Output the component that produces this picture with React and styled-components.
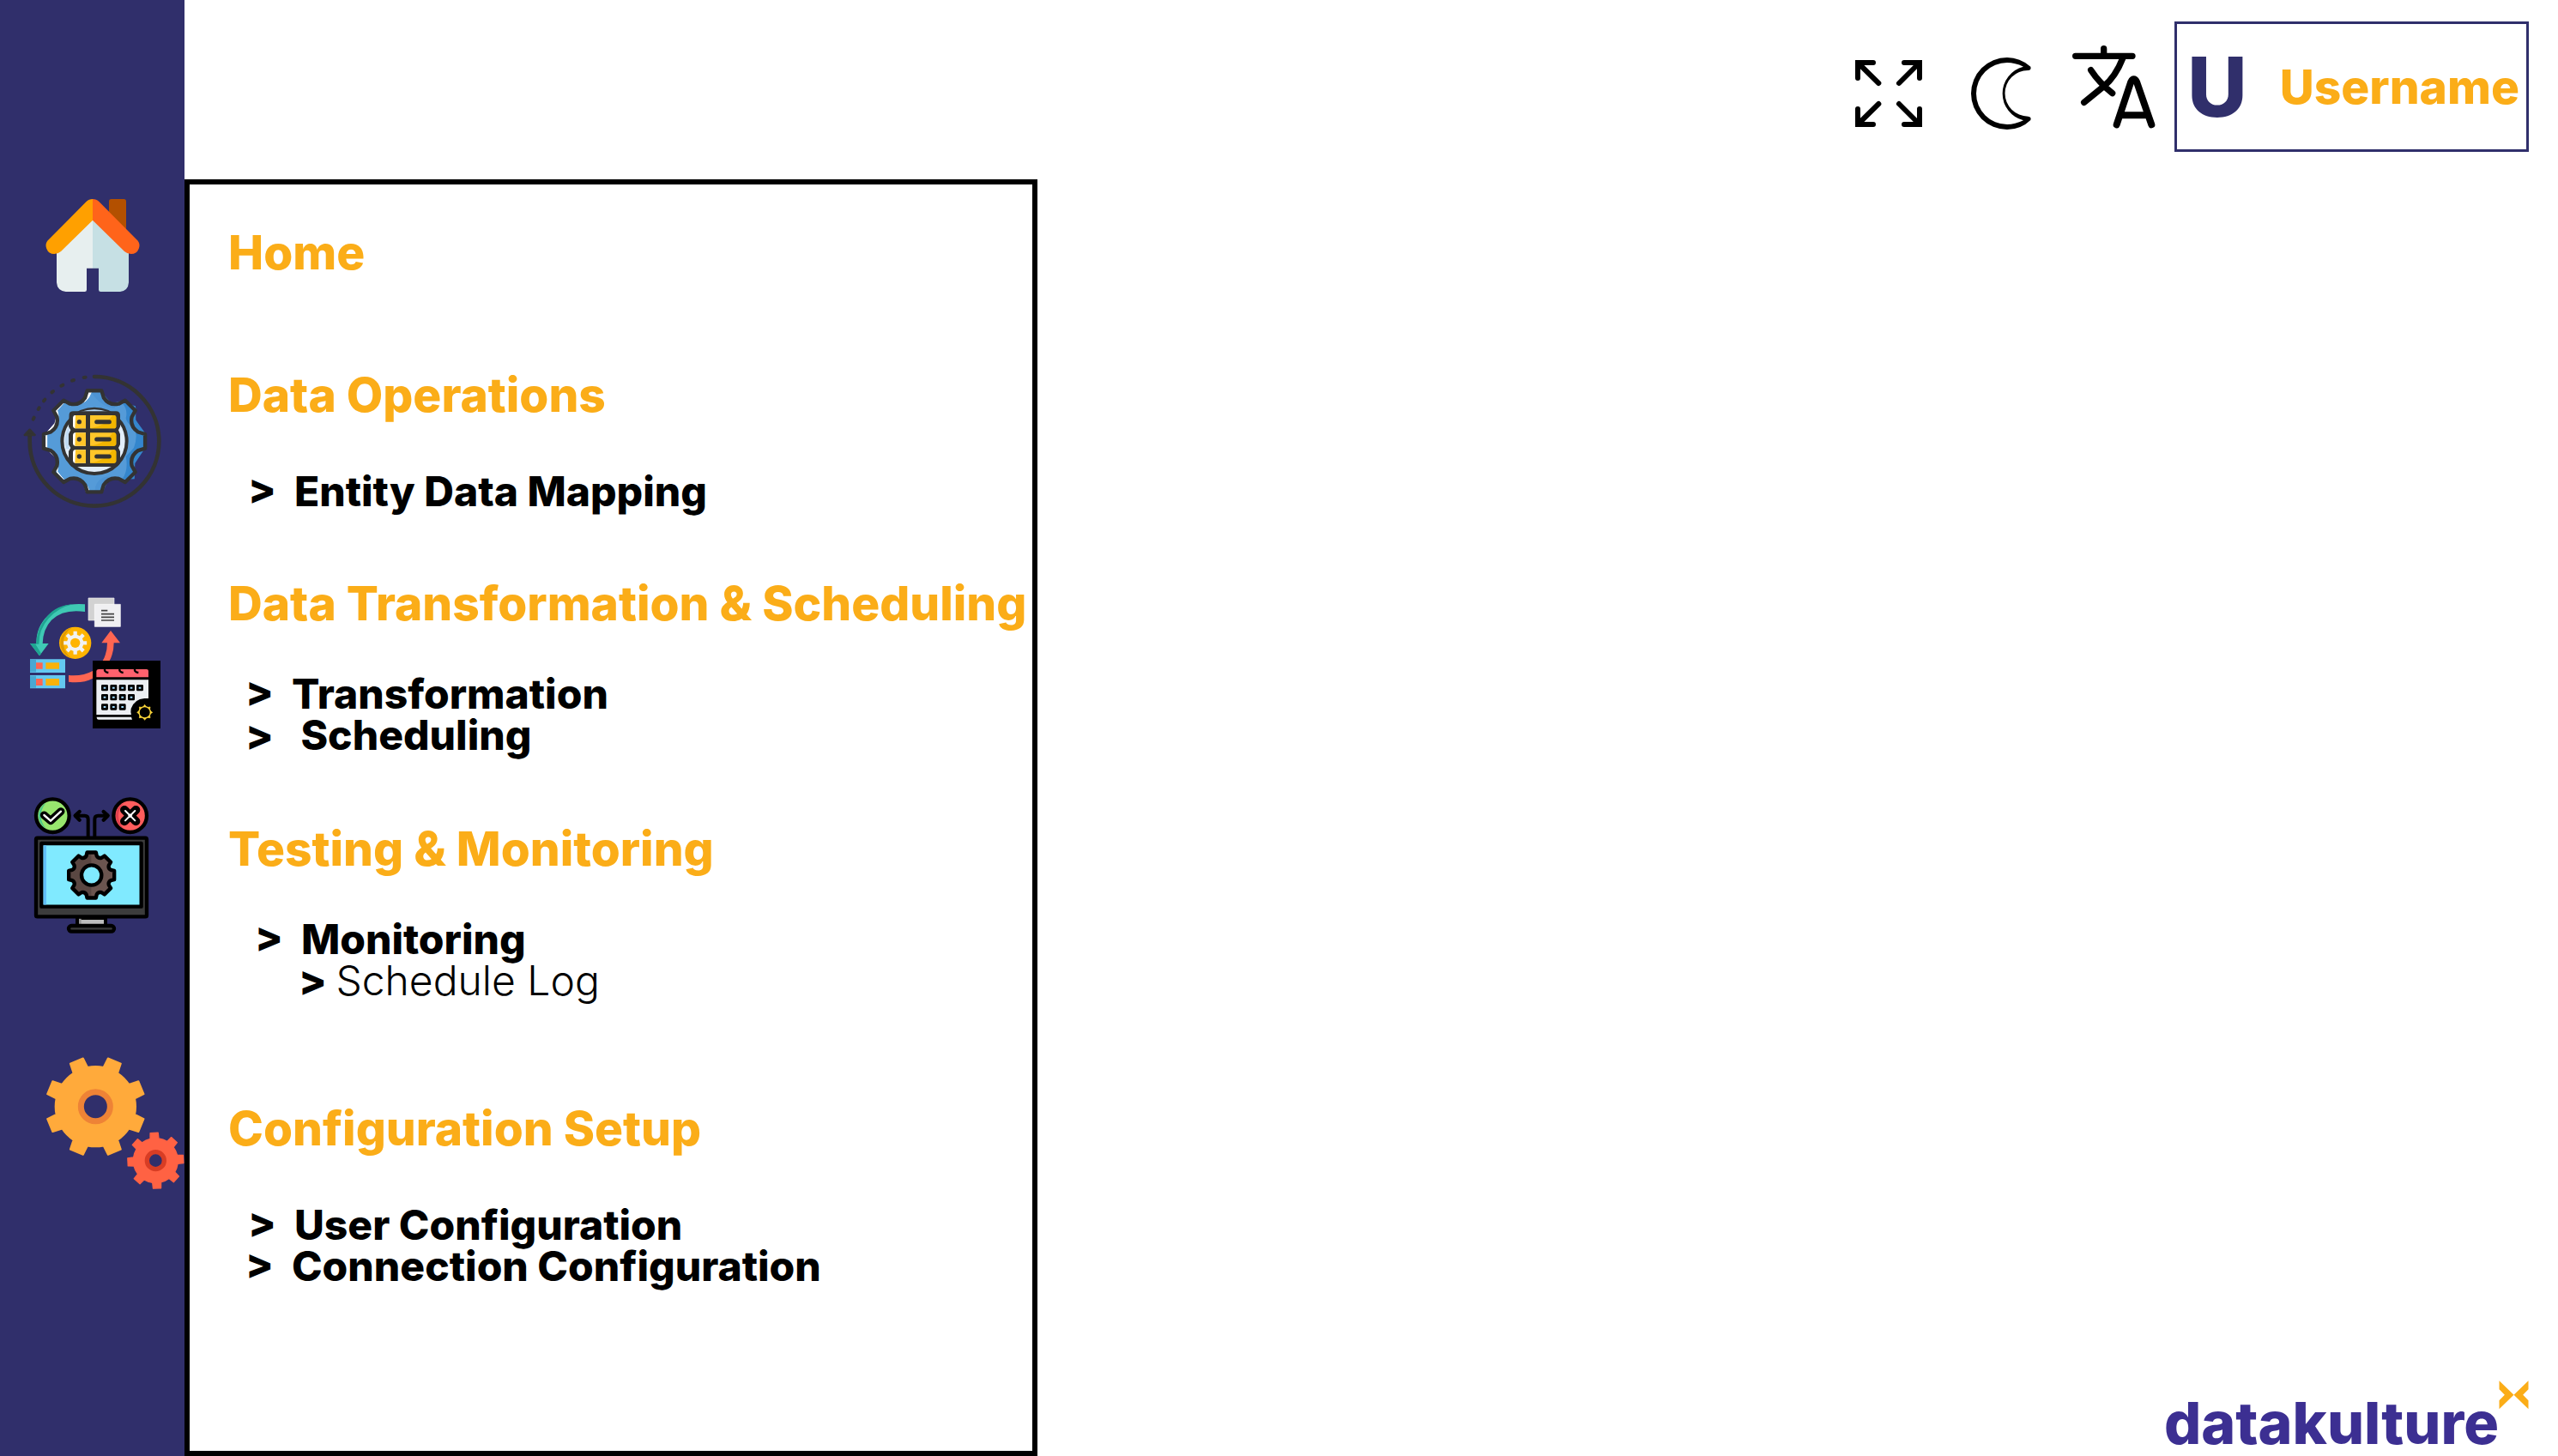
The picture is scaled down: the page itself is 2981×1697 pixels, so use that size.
import React from "react";
import styled, { createGlobalStyle } from "styled-components";

const color = {
  navy: "#302f6b",
  amber: "#fbad18",
  brand: "#3c2f92",
  ink: "#000000",
};

const GlobalStyle = createGlobalStyle`
  *, *::before, *::after { box-sizing: border-box; }
  body {
    margin: 0;
    background: #ffffff;
    color: ${color.ink};
    font-family: Inter, "Liberation Sans", sans-serif;
  }
`;

const Page = styled.div`
  display: grid;
  grid-template-columns: 215px minmax(0, 1fr);
  min-height: 100vh;
`;

const Rail = styled.nav`
  display: flex;
  flex-direction: column;
  padding-top: 206px;
  background: ${color.navy};
`;

const RailLink = styled.a`
  display: block;
  height: 160px;
  margin-top: ${(p) => p.$before}px;

  svg {
    display: block;
    width: 100%;
    height: 100%;
  }
`;

const Content = styled.div`
  display: flex;
  flex-direction: column;
`;

const TopBar = styled.header`
  display: flex;
  align-items: flex-start;
  justify-content: flex-end;
  gap: 23px;
  height: 209px;
  padding: 25px 34px 0;
`;

const Tools = styled.div`
  display: flex;
  align-items: center;
  gap: 35px;
  height: 152px;
`;

const ToolButton = styled.button`
  width: 96px;
  height: 96px;
  padding: 0;
  border: 0;
  background: none;
  color: inherit;
  cursor: pointer;

  svg {
    display: block;
    width: 100%;
    height: 100%;
    overflow: visible;
  }
`;

const UserButton = styled.button`
  display: flex;
  align-items: center;
  justify-content: space-between;
  width: 413px;
  height: 152px;
  padding: 0 8px 0 12px;
  border: 3px solid ${color.navy};
  background: #ffffff;
  font-family: inherit;
  font-weight: 800;
  cursor: pointer;
`;

const Initial = styled.span`
  color: ${color.navy};
  font-size: 96px;
  line-height: 96px;
`;

const UserName = styled.span`
  color: ${color.amber};
  font-size: 55px;
  line-height: 66px;
`;

const Body = styled.div`
  display: flex;
  flex: 1;
`;

const Menu = styled.nav`
  width: 994px;
  padding: 46px 0 0 45px;
  border: 6px solid ${color.ink};
  background: #ffffff;
  white-space: nowrap;
`;

const Group = styled.section`
  margin-top: ${(p) => p.$before}px;
`;

const GroupTitle = styled.h2`
  margin: 0;
  color: ${color.amber};
  font-size: 55px;
  font-weight: 800;
  line-height: 66px;

  a {
    color: inherit;
    text-decoration: none;
  }
`;

const Items = styled.ul`
  margin: ${(p) => p.$before}px 0 0;
  padding: 0;
  list-style: none;
`;

const Item = styled.li`
  padding-left: ${(p) => p.$indent}px;
  font-size: 48px;
  font-weight: 800;
  line-height: 48px;
`;

const ItemLink = styled.a`
  color: inherit;
  text-decoration: none;
  white-space: pre;
`;

const Light = styled.span`
  font-weight: 300;
`;

const Main = styled.main`
  display: flex;
  flex: 1;
  align-items: flex-end;
  justify-content: flex-end;
  padding-right: 34px;
`;

const Brand = styled.a`
  display: flex;
  align-items: flex-end;
  height: 88px;
  color: ${color.brand};
  font-size: 68px;
  font-weight: 800;
  line-height: 78px;
  text-decoration: none;

  svg {
    align-self: flex-start;
    width: 35px;
    height: 34px;
  }
`;

const at = (cx, cy, r, deg) => {
  const a = ((deg - 90) * Math.PI) / 180;
  return `${(cx + r * Math.cos(a)).toFixed(1)} ${(cy + r * Math.sin(a)).toFixed(1)}`;
};

/* Eight-toothed cog with flat-sided teeth. */
const cog = (cx, cy, tip, root, tipHalf, rootHalf, turn = 0) => {
  let d = "";
  for (let k = 0; k < 8; k += 1) {
    const a = turn + k * 45;
    d += `${k ? "L" : "M"}${at(cx, cy, root, a - rootHalf)}L${at(cx, cy, tip, a - tipHalf)}L${at(cx, cy, tip, a + tipHalf)}L${at(cx, cy, root, a + rootHalf)}`;
    d += `A${root} ${root} 0 0 1 ${at(cx, cy, root, a + 45 - rootHalf)}`;
  }
  return `${d}Z`;
};

/* Eight-toothed cog with scooped valleys. */
const softCog = (cx, cy, tip, shoulder, valley, tipHalf, shoulderHalf) => {
  let d = "";
  for (let k = 0; k < 8; k += 1) {
    const a = k * 45;
    d += `${k ? "L" : "M"}${at(cx, cy, tip, a - tipHalf)}L${at(cx, cy, tip, a + tipHalf)}L${at(cx, cy, shoulder, a + shoulderHalf)}`;
    d += `Q${at(cx, cy, valley, a + 22.5)} ${at(cx, cy, shoulder, a + 45 - shoulderHalf)}`;
  }
  return `${d}Z`;
};

const HomeIcon = () => (
  <svg viewBox="0 18 645 480" aria-hidden="true">
    <path d="M381 200V104Q381 96 389 96H433Q441 96 441 104V204Z" fill="#b35000" />
    <path d="M324 166L198 285V388Q200 417 230 420H296Q303 420 303 413V338H324Z" fill="#e7efef" />
    <path d="M324 166L450 285V388Q448 417 420 420H352Q345 420 345 413V338H324Z" fill="#c6e0e4" />
    <path d="M324 96Q311 96 301 106L171 237A29 29 0 0 0 190 288Q203 288 213 279L324 170Z" fill="#ffa000" />
    <path d="M324 96Q337 96 347 106L477 237A29 29 0 0 1 458 288Q445 288 435 279L324 170Z" fill="#ff641a" />
  </svg>
);

const OperationsIcon = () => {
  const body = softCog(330, 313, 179, 156, 134, 8, 12);
  return (
    <svg viewBox="0 72 645 480" aria-hidden="true">
      <path d="M330 87A226 226 0 1 1 104 313V290" fill="none" stroke="#333" strokeWidth="14" strokeLinecap="round" />
      <path d="M86 291L104 272L122 291Z" fill="#333" stroke="#333" strokeWidth="7" strokeLinejoin="round" />
      <path
        d="M293 90L299 89M252 101L258 99M214 119L220 116M181 142L186 138M153 172L157 167M134 201L137 196M116 236L119 230"
        stroke="#333"
        strokeWidth="12"
        strokeLinecap="round"
      />
      <path d={body} fill="#559bd8" />
      <path d="M318 140Q350 190 400 198Q405 178 428 182Q448 200 442 226Q442 246 470 255Q492 280 472 330L442 374Q446 400 440 430L418 446Q390 430 360 440Q330 456 332 490H360L378 450L440 442L470 440V390L505 340V290L475 240V195L430 170L390 180L355 140Z" fill="#4790d2" opacity="0.6" />
      <path d="M428 178Q448 205 440 232Q442 252 468 262Q484 290 468 336L440 366Q450 410 428 446L470 445L472 390L508 335V285L474 238V190Z" fill="#3486cd" />
      <path d="M313 139L294 170Q286 182 272 180Q304 184 320 139ZM222 180L200 205Q206 225 203 240Q192 270 164 284V340Q184 355 198 372Q205 400 200 422L222 446L196 414Q205 385 194 368L160 338V286L192 250Q202 225 196 204L216 180ZM272 448Q296 452 300 488H312Q304 454 272 448Z" fill="#fff" stroke="#fff" strokeWidth="3" />
      <path d={body} fill="none" stroke="#333" strokeWidth="13" strokeLinejoin="round" />
      <circle cx="330" cy="313" r="113" fill="#e2eefa" stroke="#333" strokeWidth="12" />
      <path d="M281 210Q330 193 378 210Z" fill="#b5d7f4" />
      <path d="M232 340Q218 300 242 258V340Z" fill="#c1daf2" />
      <path d="M242 218Q244 208 256 208H405Q420 208 420 222V262L414 274L420 288V324L414 336L420 348V390L408 402H250L240 388V348L247 336L240 324V288L247 274L240 262Z" fill="#333" />
      {[222, 283, 343].map((y) => (
        <g key={y}>
          <path d={`M262 ${y}H300V${y + 46}H262Q255 ${y + 44} 255 ${y + 37}V${y + 9}Q256 ${y} 262 ${y}Z`} fill="#fff" />
          <path d={`M264 ${y}H300V${y + 46}H262Z`} fill="#ffc629" />
          <path d={`M315 ${y}H398Q406 ${y} 406 ${y + 8}V${y + 38}Q406 ${y + 46} 398 ${y + 46}H315Z`} fill="#ffc629" />
          <path d={`M315 ${y + 46}Q370 ${y + 38} 394 ${y}H398Q406 ${y} 406 ${y + 8}V${y + 38}Q406 ${y + 46} 398 ${y + 46}Z`} fill="#f2b600" />
          <circle cx="277" cy={y + 23} r="8" fill="#333" />
          <path d={`M338 ${y + 23}H382`} stroke="#333" strokeWidth="15" strokeLinecap="round" />
        </g>
      ))}
    </svg>
  );
};

const TransformIcon = () => (
  <svg viewBox="0 69 645 480" aria-hidden="true">
    <path d="M297 103Q215 96 168 142Q126 182 127 240H105L138 283L170 240H149Q150 190 180 158Q222 118 297 129Z" fill="#3fc9b4" />
    <path d="M255 103Q198 106 164 146Q128 188 127 240H105L138 283L144 275L124 242H136Q136 190 170 152Q205 114 255 103Z" fill="#1fa592" />
    <path d="M309 81H399V159H309Z" fill="#d2d2d2" stroke="#f0f0f2" strokeWidth="2" />
    <path d="M331 103H421V181H331Z" fill="#f0f0f2" stroke="#fff" strokeWidth="2" />
    <path d="M354 125H376M354 137H399M354 148H399M354 159H399" stroke="#444" strokeWidth="5" />
    <circle cx="263" cy="238" r="56" fill="#ffb400" />
    <path d="M252 184A56 56 0 0 0 252 292Q222 272 222 238T252 184Z" fill="#e09a00" />
    <path d={cog(263, 238, 41, 29, 9, 13)} fill="#f1f2f2" />
    <circle cx="263" cy="238" r="17" fill="#ffb400" />
    <path d="M105 295H228V342H105ZM105 351H228V397H105Z" fill="#64c8f0" />
    <path d="M105 297H126V340H105ZM105 353H126V395H105Z" fill="#49a8d3" />
    <path d="M126 307H149V329H126ZM126 363H149V387H126Z" fill="#ff6652" />
    <path d="M160 307H207V329H160ZM160 363H207V387H160Z" fill="#f9b20b" />
    <path d="M240 351Q290 355 324 336V362Q290 380 240 374ZM387 195L420 238H398Q398 275 381 304H357Q375 275 375 238H355Z" fill="#ff6652" />
    <path d="M324 300H561V537H324Z" fill="#000" />
    <path d="M337 336Q338 330 345 330H512Q519 330 519 336V358H337Z" fill="#ff616d" />
    <path d="M366 328Q364 340 379 342M418 328Q416 340 431 342M471 328Q469 340 484 342" fill="none" stroke="#000" strokeWidth="7" />
    <path d="M337 367H519V432H505Q470 434 458 468Q456 480 459 489H337Z" fill="#eceff3" />
    <path d="M338 497H459L462 506H345Q338 506 338 497Z" fill="#eceff3" />
    {[
      [395, [366, 397, 428, 459, 489]],
      [428, [366, 397, 428, 459]],
      [462, [366, 397, 428]],
    ].map(([y, xs]) =>
      xs.map((x) => (
        <rect key={`${x}-${y}`} x={x - 8} y={y - 7} width="16" height="14" fill="#9fdcff" stroke="#000" strokeWidth="8" strokeLinejoin="round" />
      ))
    )}
    {[0, 45, 90, 135, 180, 225, 270, 315].map((a) => (
      <path key={a} d={`M${at(506, 481, 20, a - 16)}L${at(506, 481, 27, a)}L${at(506, 481, 20, a + 16)}Z`} fill="#ffd93b" stroke="#ffd93b" strokeWidth="2" />
    ))}
    <circle cx="506" cy="481" r="20" fill="#000" stroke="#ffd93b" strokeWidth="4" />
  </svg>
);

const MonitorIcon = () => (
  <svg viewBox="0 54 645 480" aria-hidden="true">
    <path d="M308 195V134Q308 122 296 122H262M331 195V134Q331 122 343 122H378" fill="none" stroke="#000" strokeWidth="12" />
    <path d="M278 108L263 122L278 137M362 108L377 122L362 137" fill="none" stroke="#000" strokeWidth="13" strokeLinecap="round" strokeLinejoin="round" />
    <circle cx="184" cy="122" r="58" fill="#98e66e" stroke="#000" strokeWidth="13" />
    <path d="M160 78A51 51 0 0 0 160 166Q143 145 143 122T160 78Z" fill="#4cc78a" />
    <path d="M154 120L177 140L213 107" fill="none" stroke="#000" strokeWidth="27" strokeLinecap="round" strokeLinejoin="round" />
    <path d="M154 120L177 140L213 107" fill="none" stroke="#fff" strokeWidth="7" strokeLinecap="round" />
    <circle cx="455" cy="122" r="58" fill="#ff5d5d" stroke="#000" strokeWidth="13" />
    <path d="M432 77A51 51 0 0 0 432 167Q414 145 414 122T432 77Z" fill="#e0404f" />
    <path d="M435 102L475 142M475 102L435 142" stroke="#000" strokeWidth="30" strokeLinecap="round" />
    <path d="M438 105L472 139M472 105L438 139" stroke="#fff" strokeWidth="6" strokeLinecap="round" />
    <path d="M455 116L461 122L455 128L449 122Z" fill="#fff" stroke="#fff" strokeWidth="3" />
    <path d="M270 480H369V508H270Z" fill="#bdbdbd" stroke="#000" strokeWidth="12" />
    <path d="M276 482H284V502H276Z" fill="#999" />
    <rect x="126" y="200" width="387" height="275" rx="5" fill="#3c3c3c" stroke="#000" strokeWidth="13" />
    <rect x="145" y="219" width="349" height="221" fill="#80eaff" stroke="#000" strokeWidth="13" strokeLinejoin="round" />
    <path d="M152 226H162V433H152Z" fill="#62c0f8" />
    <path d={softCog(320, 330, 81, 70, 62, 11, 15)} fill="#6b554f" />
    <path d="M319 250Q290 260 285 270L258 280L262 300L240 320V340L262 352L258 380L285 390L305 410H319Z" fill="#5a4742" />
    <path d={softCog(320, 330, 81, 70, 62, 11, 15)} fill="none" stroke="#000" strokeWidth="13" strokeLinejoin="round" />
    <circle cx="320" cy="330" r="35" fill="#80eaff" stroke="#000" strokeWidth="13" />
    <rect x="240" y="507" width="159" height="20" rx="10" fill="#3c3c3c" stroke="#000" strokeWidth="13" />
  </svg>
);

const SettingsIcon = () => (
  <svg viewBox="0 60 645 480" aria-hidden="true">
    <path d={cog(334, 239, 174, 140, 8, 11, 22.5)} fill="#ffaa3b" stroke="#ffaa3b" strokeWidth="6" strokeLinejoin="round" />
    <circle cx="334" cy="239" r="51" fill={color.navy} stroke="#ee8336" strokeWidth="21" />
    <path d={cog(544, 428, 98, 78, 8, 11, -3)} fill="#ff6243" stroke="#ff6243" strokeWidth="4" strokeLinejoin="round" />
    <circle cx="544" cy="428" r="30" fill={color.navy} stroke="#d83d24" strokeWidth="16" />
  </svg>
);

const ExpandIcon = () => (
  <svg viewBox="69 129 288 288" fill="none" stroke="currentColor" strokeWidth="18" strokeLinecap="round" aria-hidden="true">
    <path d="M159 189H105V243M108 192L178 261" />
    <path d="M267 189H321V243M318 192L249 261" />
    <path d="M159 405H105V351M108 402L178 333" />
    <path d="M267 405H321V351M318 402L249 333" />
    <path d="M96 198V183Q96 180 99 180H115V198ZM330 198V183Q330 180 327 180H311V198ZM96 396V411Q96 414 99 414H115V396ZM330 396V411Q330 414 327 414H311V396Z" fill="currentColor" stroke="none" />
  </svg>
);

const MoonIcon = () => (
  <svg viewBox="462 129 288 288" aria-hidden="true">
    <path
      fill="currentColor"
      fillRule="evenodd"
      d="M709 203Q672 171 627 171A126 126 0 0 0 627 423Q675 423 709 390Q713 378 700 377A80 80 0 0 1 700 216Q713 215 709 203ZM684 203A97 97 0 0 0 684 391Q655 405 627 405A108 108 0 0 1 627 189Q655 189 684 203Z"
    />
  </svg>
);

const TranslateIcon = () => (
  <svg viewBox="855 129 288 288" fill="none" stroke="currentColor" strokeWidth="22" strokeLinecap="round" strokeLinejoin="round" aria-hidden="true">
    <path d="M866 166H1065M965 140V162" />
    <path d="M1032 172Q1006 238 965 272L896 328M920 215Q948 258 995 296" />
    <path d="M1010 406L1060 256Q1070 238 1080 256L1132 406M1028 373H1112" strokeWidth="24" />
  </svg>
);

const BrandMark = () => (
  <svg viewBox="0 0 104 102" aria-hidden="true">
    <path d="M1 1L52 50L1 100V70L20 50L1 31ZM103 1L52 50L103 100V70L84 50L103 31Z" fill={color.amber} />
  </svg>
);

const railLinks = [
  { label: "Home", Icon: HomeIcon, before: 0 },
  { label: "Data Operations", Icon: OperationsIcon, before: 68 },
  { label: "Data Transformation & Scheduling", Icon: TransformIcon, before: 99 },
  { label: "Testing & Monitoring", Icon: MonitorIcon, before: 75 },
  { label: "Configuration Setup", Icon: SettingsIcon, before: 142 },
];

const indent = { narrow: 20, regular: 23, wide: 31, nested: 82 };

const groups = [
  {
    title: "Data Operations",
    before: 100,
    gap: 56,
    items: [{ text: ">  Entity Data Mapping", indent: indent.regular }],
  },
  {
    title: "Data Transformation & Scheduling",
    before: 73,
    gap: 49,
    items: [
      { text: ">  Transformation", indent: indent.narrow },
      { text: ">   Scheduling", indent: indent.narrow },
    ],
  },
  {
    title: "Testing & Monitoring",
    before: 75,
    gap: 49,
    items: [
      { text: ">  Monitoring", indent: indent.wide },
      { text: "> ", light: "Schedule Log", indent: indent.nested },
    ],
  },
  {
    title: "Configuration Setup",
    before: 115,
    gap: 56,
    items: [
      { text: ">  User Configuration", indent: indent.regular },
      { text: ">  Connection Configuration", indent: indent.narrow },
    ],
  },
];

export default function App() {
  return (
    <>
      <GlobalStyle />
      <Page>
        <Rail aria-label="Sections">
          {railLinks.map(({ label, Icon, before }) => (
            <RailLink key={label} href="#" aria-label={label} $before={before}>
              <Icon />
            </RailLink>
          ))}
        </Rail>
        <Content>
          <TopBar>
            <Tools>
              <ToolButton type="button" aria-label="Full screen">
                <ExpandIcon />
              </ToolButton>
              <ToolButton type="button" aria-label="Dark mode">
                <MoonIcon />
              </ToolButton>
              <ToolButton type="button" aria-label="Language">
                <TranslateIcon />
              </ToolButton>
            </Tools>
            <UserButton type="button">
              <Initial>U</Initial>
              <UserName>Username</UserName>
            </UserButton>
          </TopBar>
          <Body>
            <Menu aria-label="Menu">
              <GroupTitle>
                <a href="#">Home</a>
              </GroupTitle>
              {groups.map((group) => (
                <Group key={group.title} $before={group.before}>
                  <GroupTitle>{group.title}</GroupTitle>
                  <Items $before={group.gap}>
                    {group.items.map((item) => (
                      <Item key={item.text + (item.light || "")} $indent={item.indent}>
                        <ItemLink href="#">
                          {item.text}
                          {item.light && <Light>{item.light}</Light>}
                        </ItemLink>
                      </Item>
                    ))}
                  </Items>
                </Group>
              ))}
            </Menu>
            <Main>
              <Brand href="#">
                datakulture
                <BrandMark />
              </Brand>
            </Main>
          </Body>
        </Content>
      </Page>
    </>
  );
}
